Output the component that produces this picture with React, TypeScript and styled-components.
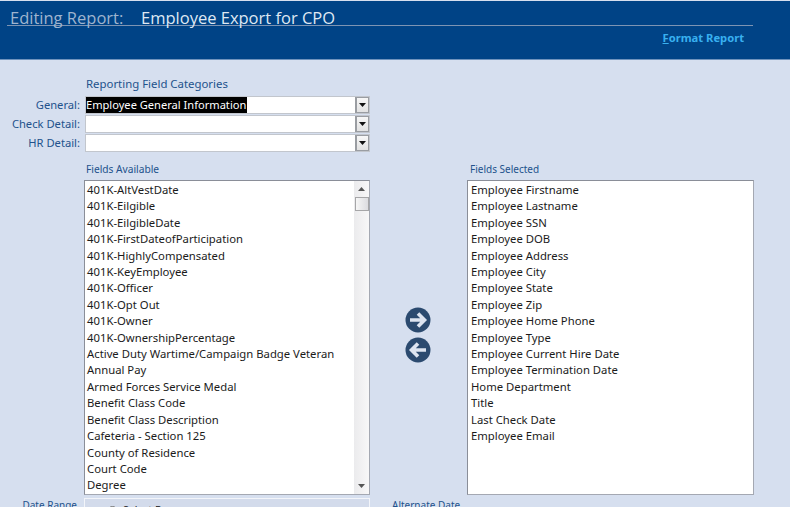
import React from "react";
import styled, { createGlobalStyle } from "styled-components";

const Global = createGlobalStyle`
  html, body { margin: 0; padding: 0; height: 100%; overflow: hidden; background: #d6dfef; }
  body { font-family: "Noto Sans", "DejaVu Sans", sans-serif; }
`;

const Page = styled.div`
  width: 790px; height: 507px; overflow: hidden; background: #d6dfef;
`;
const Header = styled.header`
  height: 58px; margin-top: 1px; background: #004386; border-bottom: 1px solid #6f93bd;
  display: flex; flex-direction: column; padding: 0 37px 0 7px;
`;
const TitleRow = styled.div`
  height: 24px; border-bottom: 1px solid #7d94b3; display: flex; align-items: flex-end;
  padding-left: 3px; font-family: "Open Sans", sans-serif; font-size: 16.5px; line-height: 15px; white-space: nowrap;
`;
const TitleLabel = styled.span`
  color: #9fb4cf; width: 131px; flex: none;
`;
const TitleValue = styled.span`
  color: #dfe8f3;
`;
const LinkRow = styled.div`
  display: flex; justify-content: flex-end; padding: 4px 9px 0 0;
`;
const FormatLink = styled.a`
  color: #38b0f0; font-weight: 700; font-size: 11.2px; line-height: 16px;
  span { text-decoration: underline; }
`;
const Main = styled.main`
  padding: 17px 0 0 0;
`;
const SectionLabel = styled.div`
  color: #22528c; font-size: 10.2px; line-height: 15px; white-space: nowrap;
`;
const Categories = styled.div`
  display: grid; grid-template-columns: 85px 285px; row-gap: 1px; margin-bottom: 10px;
`;
const CategoryTitle = styled(SectionLabel)`
  grid-column: 2; padding: 0 0 5px 1px; font-size: 11.4px; line-height: 13px;
`;
const ComboLabel = styled.label`
  color: #22528c; font-size: 11.2px; line-height: 18px; text-align: right; padding-right: 5px; white-space: nowrap;
`;
const Combo = styled.div`
  height: 18px; background: #fff; display: flex; justify-content: space-between;
  outline: 1px solid #c2c6cd; outline-offset: -1px; align-items: stretch;
`;
const ComboText = styled.span<{ $selected?: boolean }>`
  align-self: flex-start; height: 17px; padding: 0 1px; font-size: 11.1px; line-height: 17px; color: #fff;
  background: ${(p) => (p.$selected ? "#000" : "transparent")};
`;
const ComboButton = styled.span`
  flex: none; width: 15px; box-sizing: border-box; border: 2px solid #9a9da2; background: linear-gradient(#f7f7f7, #e2e2e2);
  display: flex; align-items: center; justify-content: center;
`;
const Lists = styled.div`
  display: grid; grid-template-columns: 84px 286px 97px 287px; grid-template-rows: 15px 315px;
  row-gap: 3px;
`;
const AvailableLabel = styled(SectionLabel)`
  grid-column: 2; padding-left: 2px;
`;
const SelectedLabel = styled(SectionLabel)`
  grid-column: 4; padding-left: 3px; font-size: 10px;
`;
const ListBox = styled.div`
  box-sizing: border-box; background: #fff; border: 1px solid #8a8e98; border-right-color: #a4a8b2; border-bottom-color: #a4a8b2;
  display: flex; overflow: hidden;
`;
const AvailableBox = styled(ListBox)`
  grid-column: 2; grid-row: 2;
`;
const SelectedBox = styled(ListBox)`
  grid-column: 4; grid-row: 2;
`;
const Items = styled.ul<{ $inset: number }>`
  list-style: none; margin: 0; padding: 1px 0 0 ${(p) => p.$inset}px; flex: 1; overflow: hidden;
`;
const Item = styled.li`
  height: 16.42px; color: #1b1b1b; font-size: 11.3px; line-height: 16.42px; white-space: nowrap;
`;
const ScrollBar = styled.div`
  flex: none; width: 15px; background: linear-gradient(90deg, #ebebed, #f8f7f8); display: flex; flex-direction: column; align-items: center; position: relative;
`;
const ScrollArrow = styled.div`
  height: 16px; display: flex; align-items: center; justify-content: center; flex: none;
`;
const Thumb = styled.div`
  flex: none; width: 14px; height: 14px; box-sizing: border-box; border: 1px solid #a6a6a8; background: linear-gradient(90deg, #f6f6f6, #dcdce0);
`;
const Spacer = styled.div`
  flex: 1;
`;
const Arrows = styled.div`
  grid-column: 3; grid-row: 2; display: flex; flex-direction: column; align-items: center; gap: 4px; padding-top: 127px; padding-right: 2px;
`;
const Bottom = styled.div`
  display: grid; grid-template-columns: 84px 286px auto; margin-top: 3px;
`;
const DateLabel = styled(SectionLabel)`
  text-align: right; padding: 0 7px 0 0; line-height: 14px; font-size: 10px;
`;
const DateBox = styled.div`
  height: 40px; border: 1px solid #f3f5fa; background: #d3dbeb; box-sizing: border-box; padding: 4px 0 0 22px; display: flex; gap: 5px;
  font-size: 10.5px; color: #222; line-height: 14px;
`;
const Radio = styled.span`
  width: 9px; height: 9px; margin-top: 3px; border: 1px solid #777; border-radius: 50%; background: #eee;
`;
const AltLabel = styled(SectionLabel)`
  padding-left: 22px; line-height: 14px; font-size: 10px;
`;

const available = ["401K-AltVestDate","401K-Eilgible","401K-EilgibleDate","401K-FirstDateofParticipation","401K-HighlyCompensated","401K-KeyEmployee","401K-Officer","401K-Opt Out","401K-Owner","401K-OwnershipPercentage","Active Duty Wartime/Campaign Badge Veteran","Annual Pay","Armed Forces Service Medal","Benefit Class Code","Benefit Class Description","Cafeteria - Section 125","County of Residence","Court Code","Degree"];
const selected = ["Employee Firstname","Employee Lastname","Employee SSN","Employee DOB","Employee Address","Employee City","Employee State","Employee Zip","Employee Home Phone","Employee Type","Employee Current Hire Date","Employee Termination Date","Home Department","Title","Last Check Date","Employee Email"];

const DownCaret = () => (
  <svg width="7" height="4" viewBox="0 0 7 4"><path d="M0 0h7L3.5 4z" fill="#111" /></svg>
);
const SmallCaret = ({ up }: { up?: boolean }) => (
  <svg width="7" height="4" viewBox="0 0 7 4"><path d={up ? "M0 4h7L3.5 0z" : "M0 0h7L3.5 4z"} fill="#555" /></svg>
);
const CircleArrow = ({ left }: { left?: boolean }) => (
  <svg width="26" height="26" viewBox="0 0 26 26">
    <circle cx="13" cy="13" r="12.5" fill="#2b4a6f" />
    <path d={left ? "M21 13H7M13 6.5L6.5 13l6.5 6.5" : "M5 13h14M13 6.5l6.5 6.5-6.5 6.5"} fill="none" stroke="#dde4f0" strokeWidth="3.6" />
  </svg>
);

const ComboField = ({ label, value }: { label: string; value?: string }) => (
  <>
    <ComboLabel>{label}</ComboLabel>
    <Combo>
      <ComboText $selected={!!value}>{value}</ComboText>
      <ComboButton><DownCaret /></ComboButton>
    </Combo>
  </>
);

export default function App() {
  return (
    <Page>
      <Global />
      <Header>
        <TitleRow>
          <TitleLabel>Editing Report:</TitleLabel>
          <TitleValue>Employee Export for CPO</TitleValue>
        </TitleRow>
        <LinkRow>
          <FormatLink><span>F</span>ormat Report</FormatLink>
        </LinkRow>
      </Header>
      <Main>
        <Categories>
          <CategoryTitle>Reporting Field Categories</CategoryTitle>
          <ComboField label="General:" value="Employee General Information" />
          <ComboField label="Check Detail:" />
          <ComboField label="HR Detail:" />
        </Categories>
        <Lists>
          <AvailableLabel>Fields Available</AvailableLabel>
          <SelectedLabel>Fields Selected</SelectedLabel>
          <AvailableBox>
            <Items $inset={2}>{available.map((t) => <Item key={t}>{t}</Item>)}</Items>
            <ScrollBar>
              <ScrollArrow><SmallCaret up /></ScrollArrow>
              <Thumb />
              <Spacer />
              <ScrollArrow><SmallCaret /></ScrollArrow>
            </ScrollBar>
          </AvailableBox>
          <Arrows>
            <CircleArrow />
            <CircleArrow left />
          </Arrows>
          <SelectedBox>
            <Items $inset={3}>{selected.map((t) => <Item key={t}>{t}</Item>)}</Items>
          </SelectedBox>
        </Lists>
        <Bottom>
          <DateLabel>Date Range</DateLabel>
          <DateBox><Radio />Select Range</DateBox>
          <AltLabel>Alternate Date</AltLabel>
        </Bottom>
      </Main>
    </Page>
  );
}
